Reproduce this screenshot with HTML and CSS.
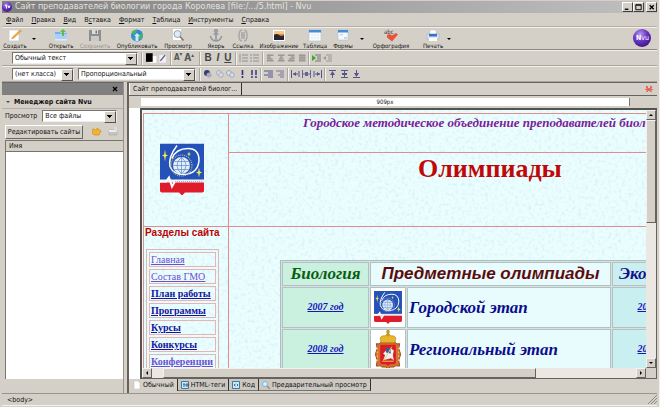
FILE: index.html
```html
<!DOCTYPE html>
<html lang="ru">
<head>
<meta charset="utf-8">
<title>Сайт преподавателей биологии города Королева - Nvu</title>
<link rel="stylesheet" href="styles.css">
</head>
<body>
<svg class="defs" width="0" height="0" aria-hidden="true">
  <defs>
    <radialGradient id="ball" cx=".4" cy=".3" r=".75"><stop offset="0" stop-color="#b79cf0"/><stop offset=".5" stop-color="#6a35c4"/><stop offset="1" stop-color="#3b1280"/></radialGradient>
    <filter id="marble" x="0" y="0" width="100%" height="100%"><feTurbulence type="fractalNoise" baseFrequency=".3" numOctaves="3" seed="4"/><feColorMatrix values="0 0 0 0 .5  0 0 0 0 .74  0 0 0 0 .8  1 0 0 0 -.46"/></filter>
    <symbol id="emblem" viewBox="0 0 44 52">
      <path fill="#2452b8" d="M0 0h44v37H0z"/>
      <path fill="#eef2f8" d="M0 36h44v3H0z"/>
      <path fill="#e01c2c" d="M0 39h44v8q0 2-3 2H25l-3 3-3-3H3q-3 0-3-2z"/>
      <path fill="none" stroke="#8f9bb5" stroke-width=".8" stroke-dasharray="1 1" d="M15 38h28"/>
      <path fill="none" stroke="#fff" stroke-width="2" d="M0 38h6l3-4 3 9 3-5"/>
      <path fill="none" stroke="#fff" stroke-width="1.500" d="M17 2q-9 12-7 21 3 8 14 8 14-1 15-14Q39 5 28 5 16 5 12 15"/>
      <circle cx="21.500" cy="22" r="10.500" fill="none" stroke="#b9c08e" stroke-width="1.200" stroke-dasharray="1 1"/>
      <circle cx="21.500" cy="22" r="8.500" fill="#e4eefb"/>
      <path fill="none" stroke="#5b86cf" stroke-width=".7" d="M13 22h17M14.500 18h14M14.500 26h14M21.500 13.500v17M21.500 13.500q-9 8.500 0 17M21.500 13.500q9 8.500 0 17"/>
      <path fill="#f2ec58" d="m5 6 .8 5 2.200 1-2.200 1L5 18l-.8-5L2 12l2.200-1zM39 24l.8 4 2.200 1-2.200 1-.8 4-.8-4-2.200-1 2.200-1zM29 8l.6 2 1.400.6-1.400.6-.6 2-.6-2-1.400-.6 1.400-.6z"/>
    </symbol>
  </defs>
</svg>

<div class="window">
  <header class="titlebar">
    <svg class="app" viewBox="0 0 10 10"><circle cx="5" cy="5" r="5" fill="url(#ball)"/><path d="M3 3.500h1.500v3M6 3.500l1 2.500 1-2.500" stroke="#fff" fill="none"/></svg>
    <h1>Сайт преподавателей биологии города Королева [file:/.../5.html] - Nvu</h1>
    <div class="winbtns">
      <button aria-label="Свернуть"><svg viewBox="0 0 10 8"><path d="M2 6.500h4" stroke="#000" stroke-width="1.500"/></svg></button>
      <button aria-label="Развернуть"><svg viewBox="0 0 10 8"><path d="M2 1.500h6v5.500H2zM2 2h6" fill="none" stroke="#000"/></svg></button>
      <button aria-label="Закрыть"><svg viewBox="0 0 10 8"><path d="m3 2 4.500 4.500M7.500 2 3 6.500" stroke="#000" stroke-width="1.400"/></svg></button>
    </div>
  </header>

  <nav class="menubar">
    <button><u>Ф</u>айл</button><button><u>П</u>равка</button><button><u>В</u>ид</button><button>В<u>с</u>тавка</button><button><u>Ф</u>ормат</button><button><u>Т</u>аблица</button><button><u>И</u>нструменты</button><button><u>С</u>правка</button>
  </nav>

  <div class="toolbar">
    <div class="file">
      <button class="tool"><svg viewBox="0 0 14 13"><path d="M1 1h10v11H1z" fill="#fff" stroke="#c5c9d4" stroke-width=".7"/><path d="m12 1 1.500 1L6 9l-2.500 1L5 7.500z" fill="#f4ad3a" stroke="#c27a20" stroke-width=".4"/></svg>Создать</button>
      <button class="drop" aria-label="Варианты создания"></button>
    </div>
    <div class="edit">
      <button class="tool"><svg viewBox="0 0 14 13"><path d="M1 3h5l1 1h6v7H1z" fill="#79aef0"/><path d="M1 5h12v5H1z" fill="#a9d0fb"/><path d="m9 0 3 3h-2v4H8V3H6z" fill="#58c23c"/><path d="M1 10h12v1.500H1z" fill="#dceafa"/></svg>Открыть</button>
      <button class="tool" disabled><svg viewBox="0 0 14 13"><path d="M1 1h12v11H1z" fill="#8e8e8e"/><path d="M4 1h6v4H4z" fill="#ddd"/><path d="M7.500 1.500H9v3H7.500z" fill="#777"/><path d="M3 7h8v5H3z" fill="#c9c9c9"/></svg>Сохранить</button>
      <button class="tool"><svg viewBox="0 0 14 13"><circle cx="7" cy="6.500" r="6" fill="#2f86e0"/><path d="M2 3q3-3 5-2l-1 3-3 2zM8 7l4-3 1 3-3 4zM2 8l3 1 1 3z" fill="#4fb748"/><path d="m7 4 3 3H8.500v5h-3V7H4z" fill="#c9ecff"/></svg>Опубликовать</button>
      <button class="tool"><svg viewBox="0 0 14 13"><path d="M2 0h8v11H2z" fill="#fff"/><circle cx="6.500" cy="5" r="3.500" fill="#dcebf5" stroke="#99a3ad"/><path d="m9 7.500 3.500 4" stroke="#8a7768" stroke-width="1.700"/></svg>Просмотр</button>
    </div>
    <div class="insert">
      <button class="tool"><svg viewBox="0 0 14 13"><g fill="none" stroke="#92979c" stroke-width="1.600"><circle cx="7" cy="2" r="1.300"/><path d="M7 3v9M4.500 5h5M1.500 7q.5 4.500 5.500 5 5-.5 5.500-5"/></g></svg>Якорь</button>
      <button class="tool"><svg viewBox="0 0 14 13"><g fill="none" stroke="#a8a8a8" stroke-width="1.500"><path d="M6 1Q3 1 3 6.500T6 12M8 1q3 0 3 5.500T8 12M6 3v7M8 3v7M5 6.500h4"/></g></svg>Ссылка</button>
      <button class="tool"><svg viewBox="0 0 14 13"><path d="M1 1h12v11H1z" fill="#fff"/><path d="M2 2h10v3H2z" fill="#f3c58b"/><path d="M2 5h10v2H2z" fill="#ea8538"/><path d="M2 6q3-2 5 0t5 0v5H2z" fill="#252536"/></svg>Изображение</button>
      <button class="tool"><svg viewBox="0 0 14 13"><path d="M1 1h12v11H1z" fill="#fff" stroke="#a6bfd8" stroke-width=".6"/><path d="M1 1h12v2.500H1z" fill="#468bd4"/><path d="M1 6h12M1 9h12M4 4v8M7 4v8M10 4v8" stroke="#dde7ef" stroke-width=".6"/></svg>Таблица</button>
      <button class="tool"><svg viewBox="0 0 14 13"><path d="M2 1h10v10H2z" fill="#f6f9fc" stroke="#a6bfd8" stroke-width=".6"/><path d="M2 1h10v2.500H2z" fill="#468bd4"/><path d="M4 5h3v1.500H4zM8 8h3v2H8z" fill="#c6d9e9"/></svg>Формы</button>
      <button class="drop" aria-label="Варианты форм"></button>
    </div>
    <div class="spell">
      <button class="tool"><svg viewBox="0 0 14 13"><text x="0" y="5" font-size="6" fill="#333">abc</text><path d="m3 6 3-1 2 1.500L12 4l2 1.500-6 7-5-4z" fill="#e8543b"/></svg>Орфография</button>
    </div>
    <div class="print">
      <button class="tool"><svg viewBox="0 0 14 13"><path d="M4 1h6v4H4z" fill="#fff" stroke="#b5c5dd" stroke-width=".6"/><path d="M1 5h12v5H1z" fill="#dce6f5" stroke="#9fb0cc" stroke-width=".6"/><path d="M3 5h8v2.500H3z" fill="#3373c8"/><path d="M3 9h8v3H3z" fill="#fff"/></svg>Печать</button>
      <button class="drop" aria-label="Варианты печати"></button>
    </div>
    <svg class="brand" viewBox="0 0 18 18"><circle cx="9" cy="9" r="9" fill="url(#ball)"/><text x="3" y="11" font-size="7" fill="#fff"><tspan font-weight="bold">N</tspan>vu</text></svg>
  </div>

  <div class="formatbar">
    <label class="combo para"><select aria-label="Стиль абзаца"><option>Обычный текст</option></select></label>
    <div class="set swatches"><svg viewBox="0 0 24 12"><path d="M5 4h7v7H5z" fill="#fff"/><path d="M1 1h7v9H1z"/><path d="M15 3h7v8h-7z" fill="#eef"/><path d="m16 9 5-6" stroke="#667" stroke-width="1.500"/></svg></div>
    <div class="set sizes"><button aria-label="Уменьшить">A<sup>▾</sup></button><button class="big" aria-label="Увеличить">A<sup>▴</sup></button></div>
    <div class="set marks"><button><b>B</b></button><button><b><i>I</i></b></button><button><b><u>U</u></b></button></div>
    <div class="set two"><svg viewBox="0 0 9 8"><path d="M3 1h6M3 4h6M3 7h6M1 0v8" stroke="#909090"/></svg><svg viewBox="0 0 9 8"><path d="M3 1h6M3 4h6M3 7h6M0 1h2M0 4h2M0 7h2" stroke="#909090"/></svg></div>
    <div class="set four"><svg viewBox="0 0 9 8"><path d="M1 1h7M1 3h4M1 5h6M1 7h7" stroke="#777"/></svg><svg viewBox="0 0 9 8"><path d="M1 1h7M3 3h3M2 5h5M1 7h7" stroke="#777"/></svg><svg viewBox="0 0 9 8"><path d="M1 1h7M4 3h4M2 5h6M1 7h7" stroke="#777"/></svg><svg viewBox="0 0 9 8"><path d="M1 1h7M1 3h7M1 5h7M1 7h7" stroke="#777"/></svg></div>
    <div class="set two"><svg viewBox="0 0 9 8"><path d="M3 1h6M5 3h4M5 5h4M3 7h6" stroke="#777"/><path d="m0 1 4 3-4 3z" fill="#3cab2c"/></svg><svg viewBox="0 0 9 8"><path d="M3 1h6M5 3h4M5 5h4M3 7h6" stroke="#999"/><path d="M3 2v4L0 4z" fill="#999"/></svg></div>
  </div>

  <div class="formatbar">
    <label class="combo klass"><select aria-label="Класс"><option>(нет класса)</option></select></label>
    <label class="combo font"><select aria-label="Шрифт"><option>Пропорциональный</option></select></label>
    <div class="set five"><svg viewBox="0 0 9 8"><circle cx="4" cy="3" r="3" fill="#3a3a78"/><circle cx="6" cy="5" r="2.500" fill="#aab"/></svg><svg viewBox="0 0 9 8"><circle cx="4" cy="3" r="2.500" fill="#ddd" stroke="#aab"/><circle cx="6" cy="5" r="2.300" fill="#ddd" stroke="#aab"/></svg><svg viewBox="0 0 9 8"><circle cx="3" cy="3" r="2.500" fill="#dde" stroke="#9ab"/><circle cx="6" cy="5" r="2.300" fill="#dde" stroke="#9ab"/></svg><svg viewBox="0 0 9 8"><path d="M4.500 0v5M4.500 6v2" stroke="#2d2d80" stroke-width="1.600"/></svg><svg viewBox="0 0 9 8"><path d="M3 0v5M3 6v2M7 0v5M7 6v2" stroke="#2d2d80" stroke-width="1.400"/></svg></div>
    <div class="set two"><svg viewBox="0 0 9 8"><path d="M0 1h9M4 3h5M0 5h9M4 7h5" stroke="#55558c"/></svg><svg viewBox="0 0 9 8"><path d="M1 1h8M5 3h4M3 5h6M5 7h4" stroke="#77779c"/></svg></div>
    <div class="set three"><svg viewBox="0 0 9 8"><path d="M.5 0v8M2 4h5M8 1v6" stroke="#55558c"/><path d="m2 4 3-2v4z" fill="#55558c"/></svg><svg viewBox="0 0 9 8"><path d="M.5 0v8M8.500 0v8M1 4h7" stroke="#66669a"/><path d="M3 2h3v4H3z" fill="#66669a"/></svg><svg viewBox="0 0 9 8"><path d="M8.500 0v8M1 1v6M2 4h5" stroke="#55558c"/><path d="m7 4-3-2v4z" fill="#55558c"/></svg></div>
    <div class="set three wide"><svg viewBox="0 0 9 8"><path d="M1 .5h7M4.500 3v5" stroke="#55558c"/><path d="m2 5 2.500-4L7 5z" fill="#55558c"/></svg><svg viewBox="0 0 9 8"><path d="M1 .5h7M1 7.500h7M4.500 1v6" stroke="#55558c"/><path d="M2 4h5" stroke="#55558c" stroke-width="2"/></svg><svg viewBox="0 0 9 8"><path d="M1 7.500h7M4.500 0v5" stroke="#55558c"/><path d="m2 3 2.500 4L7 3z" fill="#55558c"/></svg></div>
  </div>

  <div class="work">
    <aside class="sidebar">
      <div class="sidehead"><button aria-label="Закрыть панель"><svg viewBox="0 0 6 6"><path d="m1 1 4 4M5 1 1 5" stroke="#000" stroke-width="1.300"/></svg></button></div>
      <h2>Менеджер сайта Nvu</h2>
      <div class="view"><label for="files">Просмотр</label><span class="combo"><select id="files"><option>Все файлы</option></select></span></div>
      <div class="sites"><button class="editsites">Редактировать сайты</button>
        <svg viewBox="0 0 10 9"><path d="M0 3q1-3 3 0l2 0V1l4 3-2 4H2Q0 7 0 3" fill="#f2b431" stroke="#c98412" stroke-width=".6"/></svg>
        <svg viewBox="0 0 10 9"><path d="M1 3h8v5H1z" fill="#c4c4c4" stroke="#aaa" stroke-width=".6"/><path d="M1 3h8v2H1z" fill="#eee"/><path d="M6 0h3v4H6z" fill="#ddd"/></svg>
      </div>
      <div class="list"><div class="listhead">Имя</div></div>
    </aside>

    <main class="editor">
      <div class="tabs"><button class="doctab">Сайт преподавателей биолог...</button><button class="closetab" aria-label="Закрыть вкладку"><svg viewBox="0 0 8 7"><path d="M1 0h2v2h2V0h2v2L6 3h2v1H6l1 2H5V5H3v1H1l1-2H0V3h2L1 2z" fill="#e8665e"/></svg></button></div>
      <div class="ruler"><span>909px</span></div>
      <div class="frame">
        <div class="page">
          <svg class="marble"><rect width="100%" height="100%" filter="url(#marble)"/></svg>
          <div class="layout">
            <div class="logo"><svg viewBox="0 0 44 52"><use href="#emblem"/></svg></div>
            <div class="banner">
              <p class="union">Городское методическое объединение преподавателей биологии</p>
              <p class="headline">Олимпиады</p>
            </div>
            <div class="sections">
              <h3>Разделы сайта</h3>
              <ul>
                <li><a class="seen" href="#">Главная</a></li>
                <li><a class="seen" href="#">Состав ГМО</a></li>
                <li><a href="#">План работы</a></li>
                <li><a href="#">Программы</a></li>
                <li><a href="#">Курсы</a></li>
                <li><a href="#">Конкурсы</a></li>
                <li><a class="seen bold" href="#">Конференции</a></li>
              </ul>
            </div>
            <div class="content">
              <table>
                <colgroup><col class="year"><col class="pic"><col class="stage"><col class="year"></colgroup>
                <tr class="top"><th class="bio">Биология</th><th class="subj" colspan="2">Предметные олимпиады</th><th class="eco">Экология</th></tr>
                <tr><td class="green"><a href="#">2007 год</a></td><td class="white"><svg class="small" viewBox="0 0 44 52"><use href="#emblem"/></svg></td><td class="name">Городской этап</td><td class="cyan"><a href="#">2007 год</a></td></tr>
                <tr><td class="green"><a href="#">2008 год</a></td><td class="white"><svg class="arms" viewBox="0 0 30 40">
                  <path d="M3 14q4 1 4-1h16q0 2 4 1l-1 5 2 6-2 6 1 6q-5-1-6 1h-4l-2 2-2-2H9q-1-2-6-1l1-6-2-6 2-6z" fill="#d9702c" stroke="#8f4a1b"/>
                  <path d="M7 15h16v18q0 2-2 2h-4l-2 2-2-2H9q-2 0-2-2z" fill="#d81e25"/>
                  <path d="M8 13Q5 5 12 6q3-4 6 0 7-1 4 7zM14 0h2v6h-2zM13 2h4" fill="#e8b52c" stroke="#a87a15" stroke-width=".6"/>
                  <path d="m10 31 2-5-2-2 3-3 4 1 1-3 3 2-1 5 1 5-3-2-4 1z" fill="#f0f0f0"/><path d="m13 18 4 1 1 5-5-1z" fill="#2b60ad"/><path d="m19 17-8 14M9 32h12" stroke="#e9cf5a"/><path d="M4 18v15M26 18v15" stroke="#f4d08b" stroke-dasharray="2 2"/>
                </svg></td><td class="name">Региональный этап</td><td class="cyan"><a href="#">2008 год</a></td></tr>
              </table>
            </div>
          </div>
        </div>
        <div class="vbar"><button class="up" aria-label="Вверх"></button><div class="thumb"></div><button class="down" aria-label="Вниз"></button></div>
        <div class="hbar"><button class="left" aria-label="Влево"></button><div class="thumb"></div><button class="right" aria-label="Вправо"></button></div>
        <div class="corner"></div>
      </div>
      <div class="modes">
        <button class="on"><svg viewBox="0 0 8 8"><path d="M1 0h4l2 2v6H1z" fill="#fff" stroke="#bbb" stroke-width=".5"/></svg>Обычный</button>
        <button><svg viewBox="0 0 8 8"><path d="M.5.500h7v7h-7z" fill="#c9e9fa" stroke="#3c7ba6"/><path d="M2 3h2M3 3v3M5 3h2v2H5z" stroke="#246" stroke-width=".8" fill="none"/></svg>HTML-теги</button>
        <button><svg viewBox="0 0 8 8"><path d="M.5.500h7v7h-7z" fill="#c9e9fa" stroke="#3c7ba6"/><path d="M3.500 3 2 4l1.500 1M5 3l1 1-1 1" stroke="#246" stroke-width=".8" fill="none"/></svg>Код</button>
        <button><svg viewBox="0 0 8 8"><circle cx="3" cy="3" r="2.500" fill="#d8f1ff" stroke="#6fb7e6"/><path d="m5 5 3 3" stroke="#b0865e" stroke-width="1.400"/></svg>Предварительный просмотр</button>
      </div>
    </main>
  </div>
  <footer class="status"><span>&lt;body&gt;</span><svg viewBox="0 0 9 9"><path d="m0 9 9-9M3 9l6-6M6 9l3-3" stroke="#8c8a84"/></svg></footer>
</div>
</body>
</html>
```
FILE: styles.css
```css
* { box-sizing: border-box; }
body {
  margin: 0;
  background: #d4d0c8;
  color: #111;
  font: 7px/10px "DejaVu Sans Condensed", "DejaVu Sans", sans-serif;
}
button, select { font: inherit; color: inherit; margin: 0; padding: 0; border: 0; background: none; }
h1, h2, h3, p, ul { margin: 0; padding: 0; font-weight: normal; list-style: none; }
.defs { position: absolute; }
.window {
  display: flex;
  flex-direction: column;
  height: 100vh;
  padding: 1px 2px 1px;
  overflow: hidden;
  border-right: 1px solid #f2f0ec;
}

.titlebar {
  display: flex;
  align-items: center;
  gap: 3px;
  flex: 0 0 12px;
  background: linear-gradient(90deg, #808080, #c0c0c0);
  color: #e6e3dc;
}
.app { width: 10px; height: 10px; }
.titlebar h1 { flex: 1; font-family: "DejaVu Sans", sans-serif; font-size: 8px; line-height: 12px; white-space: nowrap; }
.winbtns { display: flex; }
.winbtns button {
  width: 11px;
  height: 10px;
  background: #d4d0c8;
  border: 1px solid;
  border-color: #fff #404040 #404040 #fff;
}
.winbtns button:last-child { margin-left: 2px; }
.winbtns svg { display: block; width: 9px; height: 8px; }

.menubar { display: flex; gap: 8px; flex: 0 0 14px; padding-left: 4px; align-items: center; border-bottom: 1px solid #b5b1aa; }
.menubar button { line-height: 12px; }

.toolbar { display: flex; flex: 0 0 23px; gap: 6px; border-top: 1px solid #f1efea; border-bottom: 1px solid #8c8a84; }
.toolbar > div { display: grid; }
.file { grid-template-columns: 26px 12px; }
.edit { grid-template-columns: 30px 26px 46px 24px; column-gap: 6px; }
.insert { grid-template-columns: 24px 18px 42px 18px 26px 6px; column-gap: 6px; margin-left: 8px; }
.insert .drop { margin-left: -6px; }
.spell { grid-template-columns: 30px; margin-left: 2px; }
.print { grid-template-columns: 26px 6px; margin-left: 8px; }
.tool {
  display: flex;
  flex-direction: column;
  align-items: center;
  padding-top: 1px;
  font-size: 6px;
  line-height: 7px;
  white-space: nowrap;
}
.tool svg { width: 14px; height: 13px; flex: none; }
.tool:disabled { color: #99958e; }
.drop::after {
  content: "";
  display: block;
  width: 0;
  border: 2px solid transparent;
  border-top: 2px solid #000;
  border-bottom: 0;
}
.drop { display: flex; align-items: center; justify-content: center; }
.brand { width: 18px; height: 18px; margin: 1px 6px 0 auto; }

.formatbar { display: flex; align-items: center; flex: 0 0 16px; padding-left: 10px; border-top: 1px solid #f1efea; border-bottom: 1px solid #aaa69f; }
.combo {
  display: flex;
  position: relative;
  height: 12px;
  background: #fff;
  border: 1px solid;
  border-color: #77746e #eee #eee #77746e;
}
.combo select { appearance: none; width: 100%; padding-left: 2px; line-height: 10px; outline: 0; }
.combo::after {
  content: "";
  position: absolute;
  right: 0;
  top: 0;
  width: 10px;
  height: 10px;
  border: 1px solid;
  border-color: #fff #55524d #55524d #fff;
  background: linear-gradient(#000, #000) 2px 3px / 5px 1px no-repeat, linear-gradient(#000, #000) 3px 4px / 3px 1px no-repeat, linear-gradient(#000, #000) 4px 5px / 1px 1px no-repeat, #d4d0c8;
}
.para { width: 126px; }
.klass { width: 62px; margin-right: 4px; }
.font { width: 118px; }
.set { display: flex; align-items: center; gap: 2px; height: 13px; padding: 0 2px; margin-left: 1px; border-left: 1px solid #f4f2ee; box-shadow: -1px 0 #aaa69f; }
.set svg { width: 9px; height: 8px; }
.combo + .set { margin-left: 4px; }
.swatches svg { width: 24px; height: 12px; }
.swatches, .sizes { width: 28px; }
.sizes { color: #555; }
.sizes button { font-size: 8px; font-weight: bold; line-height: 10px; white-space: nowrap; }
.sizes .big { font-size: 10px; }
.sizes sup { font-size: 6px; line-height: 0; }
.marks { width: 35px; justify-content: space-around; font-family: "Liberation Sans", sans-serif; font-size: 10px; color: #444; }
.two { width: 26px; }
.four { width: 45px; }
.five { width: 60px; justify-content: space-between; }
.three { width: 36px; }
.wide { gap: 3px; width: 40px; }

.work { display: flex; flex: 1; min-height: 0; }
.sidebar { display: flex; flex-direction: column; flex: 0 0 122px; border-right: 1px solid #99958e; }
.sidehead { display: flex; justify-content: flex-end; align-items: center; height: 13px; padding-right: 5px; background: #808080; border-top: 1px solid #666; }
.sidehead svg { display: block; width: 6px; height: 6px; }
.sidebar h2 { display: flex; align-items: center; gap: 4px; height: 14px; padding-left: 4px; font-size: 7px; font-weight: bold; border-bottom: 1px solid #b5b1aa; white-space: nowrap; }
.sidebar h2::before { content: ""; border: 2px solid transparent; border-top-color: #446; border-bottom: 0; }
.view { display: flex; align-items: center; gap: 5px; padding: 0 6px 0 3px; height: 14px; }
.view .combo { flex: 1; }
.sites { display: flex; align-items: center; gap: 6px; height: 17px; padding-left: 3px; }
.sites svg { width: 10px; height: 9px; }
.editsites { width: 78px; height: 14px; margin-right: 3px; border: 1px solid; border-color: #fff #6a6862 #6a6862 #fff; white-space: nowrap; }
.list { flex: 1; margin: 0 0 14px 3px; background: #fff; border: solid #77746e; border-width: 1px 0 0 1px; }
.listhead { height: 11px; padding-left: 3px; background: #d4d0c8; border-bottom: 1px solid #77746e; }

.editor { display: flex; flex-direction: column; flex: 1; min-width: 0; margin-left: 3px; border-left: 2px solid #66635e; border-top: 1px solid #66635e; }
.tabs { display: flex; flex: 0 0 13px; justify-content: space-between; align-items: center; border-bottom: 1px solid #66635e; }
.doctab { height: 12px; padding: 0 4px 0 3px; border-right: 1px solid #33312e; border-left: 1px solid #fff; white-space: nowrap; }
.closetab { padding-right: 4px; }
.closetab svg { display: block; width: 8px; height: 7px; }
.ruler { flex: 0 0 10px; margin: 2px 27px 0 12px; background: #d4d0c8; }
.ruler span { display: block; height: 8px; background: #fff; border-right: 1px solid #77746e; font-size: 6px; line-height: 8px; text-align: center; }
.frame {
  display: grid;
  grid-template: minmax(0, 1fr) 10px / minmax(0, 1fr) 10px;
  flex: 1;
  min-height: 0;
  border-left: 11px solid #fff;
  box-shadow: inset 2px 2px #55534f, inset -1px -1px #66635e;
  padding: 2px 1px 1px 2px;
}
.page { position: relative; overflow: hidden; background: #ebfeff; font-family: "Liberation Serif", serif; }
.marble { position: absolute; inset: 0; width: 100%; height: 100%; }
.layout { position: relative; display: grid; grid-template: 112px auto / 85px minmax(0, 1fr); margin: 3px 0 0 1px; border: solid #e28d8d; border-width: 1px 0 0 1px; white-space: nowrap; }
.logo { padding: 29px 0 0 16px; border-right: 1px solid #e28d8d; }
.logo svg { display: block; width: 44px; height: 53px; }
.union { height: 39px; padding: 0 0 0 74px; border-bottom: 1px solid #e28d8d; color: #7b2196; font-size: 13px; line-height: 17px; font-weight: bold; font-style: italic; }
.headline { padding-left: 189px; color: #c00808; font-size: 26px; line-height: 31px; font-weight: bold; }
.sections { border: solid #e28d8d; border-width: 1px 1px 0 0; padding: 0 9px 0 1px; }
.sections h3 { color: #c00000; font: bold 10px/12px "Liberation Sans", sans-serif; }
.sections ul { display: grid; gap: 2px; margin: 10px 0 0 1px; padding: 2px; border: 1px solid #dfb6b6; }
.sections li { height: 15px; padding-left: 1px; border: 1px solid #e8b3b3; line-height: 14px; font-size: 10px; }
.sections a { color: #14149c; font-weight: bold; }
.sections .seen { color: #6c4fd0; font-weight: normal; }
.sections .bold { font-weight: bold; }
.content { padding: 33px 0 0 51px; border-top: 1px solid #e28d8d; }
table { width: 420px; table-layout: fixed; border: 1px solid #aebcbc; border-spacing: 1px; background: #d3e3e4; }
.year { width: 87px; }
.pic { width: 36px; }
.stage { width: 204px; }
th, td { height: 41px; padding: 0; border: 1px solid #b4c1c1; background: #e8fcfe; text-align: center; font-weight: bold; font-style: italic; }
.top th { height: 24px; font-size: 17px; line-height: 20px; }
.top .bio { background: #caf0df; color: #075f0f; }
.top .subj { color: #5c0c0c; font: italic bold 17px/20px "Liberation Sans", sans-serif; }
.top .eco { background: #caeff0; color: #12128c; text-align: left; padding-left: 6px; }
td.green { background: #caf0df; }
td.cyan { background: #caeff0; }
td.white { background: #fff; }
td a { color: #1515c0; font-size: 10px; }
.name { color: #0c0c8c; font-size: 17px; text-align: left; padding-left: 1px; }
.small, .arms { display: block; margin: 0 auto; }
.small { width: 28px; height: 33px; }
.arms { width: 30px; height: 39px; }

.vbar, .hbar { display: flex; background: #ebe8e3; }
.vbar { flex-direction: column; }
.vbar button, .hbar button, .hbar .thumb, .vbar .thumb { flex: 0 0 10px; background: #d4d0c8; border: 1px solid; border-color: #f4f2ee #66635e #66635e #f4f2ee; }
.vbar button, .hbar button { display: flex; align-items: center; justify-content: center; }
.vbar button::after, .hbar button::after { content: ""; border: 2px solid transparent; }
.vbar .thumb { flex: 0 0 40%; }
.vbar .down { margin-top: auto; }
.hbar .right { margin-left: auto; }
.hbar .left { margin-right: 11px; }
.hbar .thumb { flex: 0 0 74%; }
.up::after { border-bottom-color: #000 !important; border-top: 0 !important; }
.down::after { border-top-color: #000 !important; border-bottom: 0 !important; }
.left::after { border-right-color: #000 !important; border-left: 0 !important; }
.right::after { border-left-color: #000 !important; border-right: 0 !important; }
.corner { background: #d4d0c8; }

.modes { display: flex; flex: 0 0 14px; padding: 0 0 2px 1px; }
.modes button { display: flex; align-items: center; gap: 2px; padding: 0 3px; background: #cbc8c2; border-right: 1px solid #33312e; border-bottom: 1px solid #77746e; white-space: nowrap; }
.modes .on { background: none; border-bottom: 0; }
.modes svg { width: 8px; height: 8px; }
.status { display: flex; justify-content: space-between; align-items: center; flex: 0 0 13px; padding-left: 5px; border-top: 1px solid #99958e; border-bottom: 1px solid #f4f2ee; }
.status svg { width: 9px; height: 9px; }
```
